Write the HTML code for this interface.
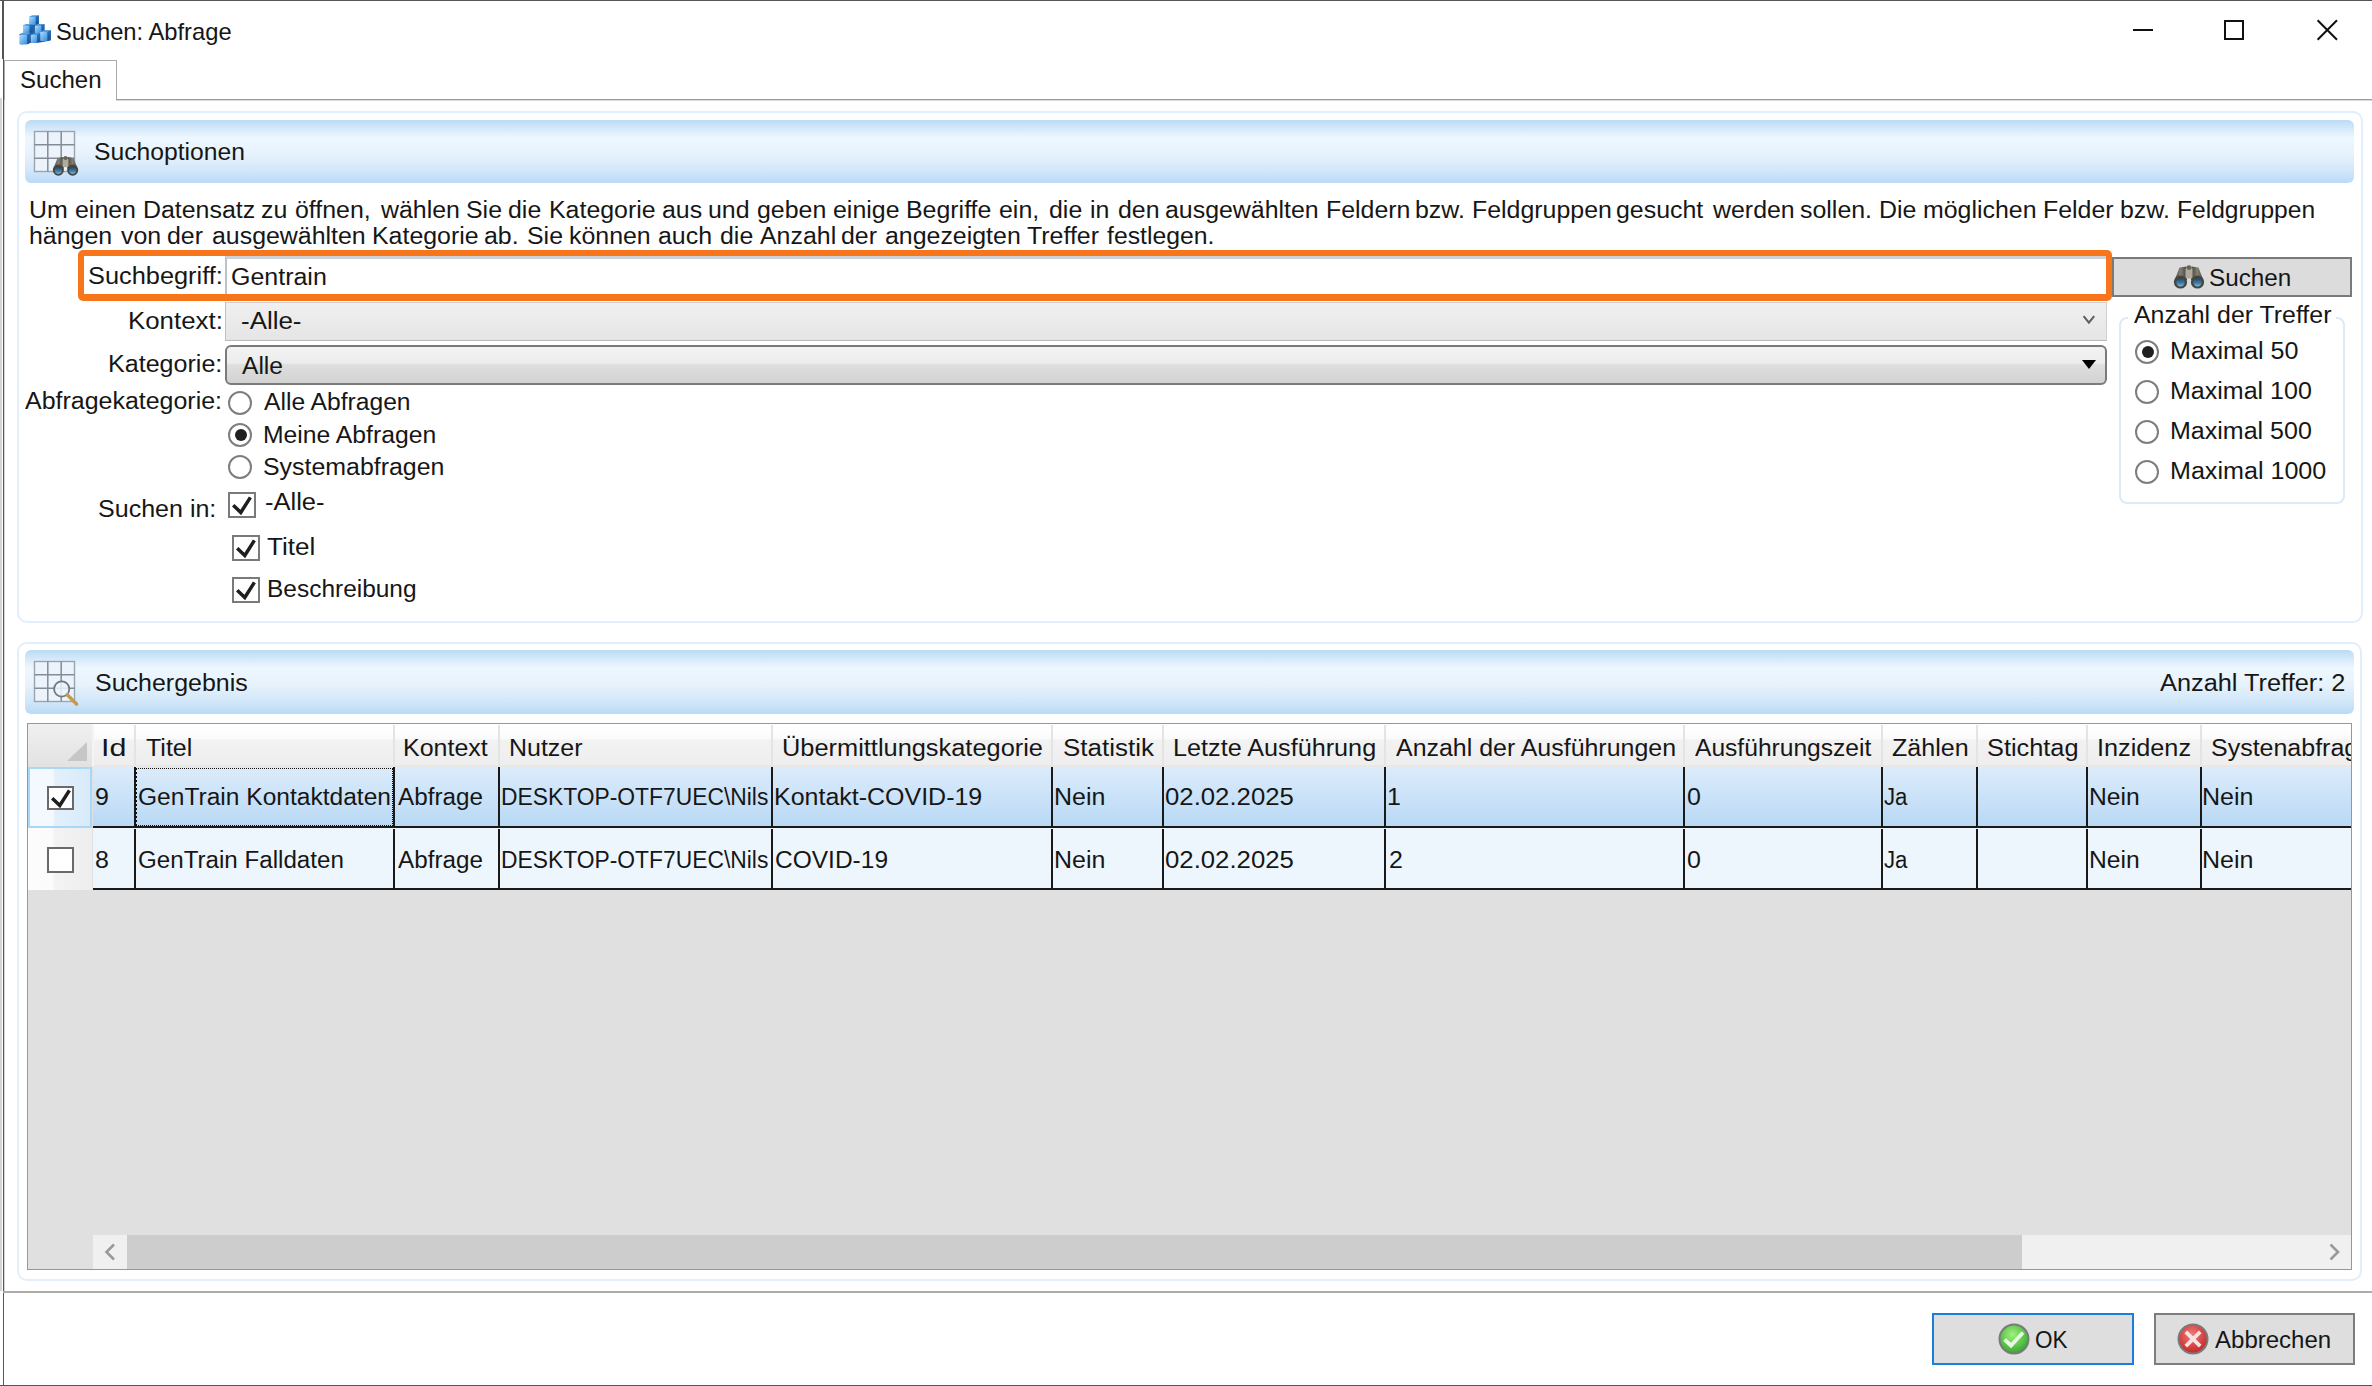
<!DOCTYPE html>
<html><head><meta charset="utf-8">
<style>
html,body{margin:0;padding:0;width:2372px;height:1386px;overflow:hidden;background:#fff;}
body{position:relative;font-family:"Liberation Sans", sans-serif;color:#000;}
.a{position:absolute;box-sizing:border-box;}
.t{position:absolute;white-space:pre;line-height:30px;transform-origin:0 0;font-family:"Liberation Sans", sans-serif;color:#161616;}
.hdr{background:linear-gradient(to bottom,#bbdbf5 0%,#eef7fe 28%,#e6f2fc 55%,#d2e7f9 80%,#badaf5 100%);border-radius:6px;}
.grp{border:2px solid #e1eefb;border-radius:10px;}
.radio{position:absolute;box-sizing:border-box;width:24px;height:24px;border-radius:50%;border:2px solid #7e7e7e;background:#fff;}
.radio.on{border-color:#7e7e7e;}
.radio.on::after{content:"";position:absolute;left:4.5px;top:4px;width:12px;height:12px;border-radius:50%;background:#202020;}
.cb{position:absolute;box-sizing:border-box;width:28px;height:26px;border:2px solid #7a7a7a;background:#fff;}
.vl{position:absolute;width:2px;background:#1a1a1a;}
.hs{position:absolute;width:2px;background:#e4e4e4;}
</style></head><body>
<!-- window frame -->
<div class="a" style="left:0;top:0;width:2372px;height:1px;background:#555;"></div>
<div class="a" style="left:2px;top:0;width:2px;height:59px;background:#555;"></div>
<div class="a" style="left:3px;top:59px;width:1px;height:1327px;background:#555;"></div>
<div class="a" style="left:0;top:98px;width:2px;height:1193px;background:#d4d4d4;"></div>
<div class="a" style="left:4px;top:99px;width:1px;height:1192px;background:#d8d8d8;"></div>
<div class="a" style="left:0;top:1385px;width:2372px;height:1px;background:#555;"></div>

<!-- title icon -->
<svg class="a" style="left:18px;top:14px" width="34" height="32" viewBox="0 0 34 32">
 <defs>
  <linearGradient id="cf" x1="0" y1="0" x2="1" y2="1"><stop offset="0" stop-color="#b4dcfc"/><stop offset="0.5" stop-color="#6db6f2"/><stop offset="1" stop-color="#3a8ad6"/></linearGradient>
  <linearGradient id="cs" x1="0" y1="0" x2="0" y2="1"><stop offset="0" stop-color="#2b72bb"/><stop offset="1" stop-color="#17508f"/></linearGradient>
 </defs>
 <g>
  <polygon points="11.5,3 20.8,1.5 20.8,10.2 26.3,10.2 26.3,16.5 32.8,16.5 32.8,26.5 22,28.5 12.8,28.8 3,30.5 1.5,20 5.5,19 5.5,11 11.5,10.5" fill="#23609e"/>
  <polygon points="11.0,2.9 14.1,1.3 20.8,1.3 17.7,2.9" fill="#4f9fe4"/>
  <polygon points="17.7,2.9 20.8,1.3 20.8,9.5 17.7,11.1" fill="url(#cs)"/>
  <rect x="11.0" y="2.9" width="6.7" height="8.2" rx="1" fill="url(#cf)"/>
  <polygon points="16.9,11.5 20.0,10.0 26.5,10.0 23.4,11.5" fill="#4f9fe4"/>
  <polygon points="23.4,11.5 26.5,10.0 26.5,18.1 23.4,19.6" fill="url(#cs)"/>
  <rect x="16.9" y="11.5" width="6.5" height="8.1" rx="1" fill="url(#cf)"/>
  <polygon points="5.2,11.6 8.1,10.1 14.4,10.1 11.5,11.6" fill="#4f9fe4"/>
  <polygon points="11.5,11.6 14.4,10.1 14.4,17.8 11.5,19.3" fill="url(#cs)"/>
  <rect x="5.2" y="11.6" width="6.3" height="7.7" rx="1" fill="url(#cf)"/>
  <polygon points="22.1,17.9 25.6,16.2 32.9,16.2 29.4,17.9" fill="#4f9fe4"/>
  <polygon points="29.4,17.9 32.9,16.2 32.9,25.3 29.4,27.0" fill="url(#cs)"/>
  <rect x="22.1" y="17.9" width="7.3" height="9.1" rx="1" fill="url(#cf)"/>
  <polygon points="12.6,20.9 15.7,19.4 22.2,19.4 19.1,20.9" fill="#4f9fe4"/>
  <polygon points="19.1,20.9 22.2,19.4 22.2,27.5 19.1,29.0" fill="url(#cs)"/>
  <rect x="12.6" y="20.9" width="6.5" height="8.1" rx="1" fill="url(#cf)"/>
  <polygon points="1.3,20.9 4.9,19.1 12.7,19.1 9.1,20.9" fill="#4f9fe4"/>
  <polygon points="9.1,20.9 12.7,19.1 12.7,28.7 9.1,30.5" fill="url(#cs)"/>
  <rect x="1.3" y="20.9" width="7.8" height="9.6" rx="1" fill="url(#cf)"/>
 </g>
</svg>

<!-- window buttons -->
<div class="a" style="left:2133px;top:29px;width:20px;height:2px;background:#111;"></div>
<div class="a" style="left:2224px;top:20px;width:20px;height:20px;border:2px solid #111;"></div>
<svg class="a" style="left:2316px;top:19px" width="23" height="23" viewBox="0 0 23 23"><path d="M1.6 1.3 L21 20.7 M21 1.3 L1.6 20.7" stroke="#111" stroke-width="2" fill="none"/></svg>

<!-- tab -->
<div class="a" style="left:4px;top:60px;width:113px;height:40px;border:1px solid #aaa;border-bottom:none;background:#fff;"></div>
<div class="a" style="left:116px;top:99px;width:2256px;height:1px;background:#9c9c9c;"></div><div class="a" style="left:116px;top:100px;width:2256px;height:1px;background:#dadada;"></div>

<!-- tab page bottom -->
<div class="a" style="left:3px;top:1291px;width:2369px;height:2px;background:#acacac;"></div>

<!-- group 1 -->
<div class="a grp" style="left:17px;top:111px;width:2346px;height:512px;"></div>
<div class="a hdr" style="left:25px;top:120px;width:2329px;height:63px;"></div>
<!-- icon grid 1 -->
<svg class="a" style="left:33px;top:130px" width="48" height="48" viewBox="0 0 48 48">
 <rect x="1.5" y="1.5" width="40" height="40" fill="#edf3fa" stroke="#9aa4ae" stroke-width="1.4"/>
 <path d="M14.8 1.5V41.5M28.2 1.5V41.5M1.5 14.8H41.5M1.5 28.2H41.5" stroke="#838d97" stroke-width="1.5"/>
</svg>
<svg class="a" style="left:52px;top:155px" width="27" height="21" viewBox="0 0 32 25">
 <defs>
  <linearGradient id="h1b" x1="0" y1="0" x2="1" y2="0"><stop offset="0" stop-color="#45433c"/><stop offset="0.5" stop-color="#827f73"/><stop offset="1" stop-color="#45433c"/></linearGradient>
  <linearGradient id="h1g" x1="0" y1="0" x2="0" y2="1"><stop offset="0" stop-color="#24445e"/><stop offset="0.6" stop-color="#3f7ea8"/><stop offset="1" stop-color="#6cc0e8"/></linearGradient>
 </defs>
 <polygon points="1,18 6.5,3.5 13.5,2.5 14,16" fill="url(#h1b)"/>
 <polygon points="18,16 18.5,2.5 25.5,3.5 31,18" fill="url(#h1b)"/>
 <rect x="12.5" y="4.5" width="7" height="10" fill="#b0ab9b"/>
 <circle cx="16" cy="3.6" r="2.4" fill="#66635a"/>
 <circle cx="7.5" cy="18" r="6.6" fill="#46453f"/>
 <circle cx="24.5" cy="18" r="6.6" fill="#46453f"/>
 <circle cx="7.5" cy="18.3" r="4.2" fill="url(#h1g)"/>
 <circle cx="24.5" cy="18.3" r="4.2" fill="url(#h1g)"/>
</svg>

<!-- orange search box -->
<div class="a" style="left:225px;top:256px;width:1882px;height:38px;border-left:2px solid #bcc2c8;border-top:3px solid #cdd1d5;background:#fff;"></div>
<div class="a" style="left:78px;top:250px;width:2034px;height:51px;border:6px solid #f7761c;border-width:6.5px 6px 7px 6px;border-radius:5px;"></div>
<!-- Suchen button -->
<div class="a" style="left:2112px;top:257px;width:240px;height:40px;border:2px solid #7a7a7a;background:#dcdcdc;"></div>
<svg class="a" style="left:2173px;top:264px" width="32" height="25" viewBox="0 0 32 25">
 <defs>
  <linearGradient id="h2b" x1="0" y1="0" x2="1" y2="0"><stop offset="0" stop-color="#45433c"/><stop offset="0.5" stop-color="#827f73"/><stop offset="1" stop-color="#45433c"/></linearGradient>
  <linearGradient id="h2g" x1="0" y1="0" x2="0" y2="1"><stop offset="0" stop-color="#24445e"/><stop offset="0.6" stop-color="#3f7ea8"/><stop offset="1" stop-color="#6cc0e8"/></linearGradient>
 </defs>
 <polygon points="1,18 6.5,3.5 13.5,2.5 14,16" fill="url(#h2b)"/>
 <polygon points="18,16 18.5,2.5 25.5,3.5 31,18" fill="url(#h2b)"/>
 <rect x="12.5" y="4.5" width="7" height="10" fill="#b0ab9b"/>
 <circle cx="16" cy="3.6" r="2.4" fill="#66635a"/>
 <circle cx="7.5" cy="18" r="6.6" fill="#46453f"/>
 <circle cx="24.5" cy="18" r="6.6" fill="#46453f"/>
 <circle cx="7.5" cy="18.3" r="4.2" fill="url(#h2g)"/>
 <circle cx="24.5" cy="18.3" r="4.2" fill="url(#h2g)"/>
</svg>

<!-- Kontext combo -->
<div class="a" style="left:225px;top:302px;width:1882px;height:39px;background:linear-gradient(#f0f0f0,#e5e5e5);border:1px solid #cfcfcf;border-left-color:#c0c0c0;border-bottom-color:#b9b9b9;"></div>
<svg class="a" style="left:2082px;top:314px" width="14" height="12" viewBox="0 0 14 12"><path d="M1.6 2.2 L6.9 8.6 L12.2 2.2" stroke="#606060" stroke-width="2.1" fill="none"/></svg>
<!-- Kategorie combo -->
<div class="a" style="left:225px;top:345px;width:1882px;height:40px;border:2px solid #7b7b7b;border-radius:6px;background:linear-gradient(#f3f3f3 0%,#ececec 45%,#dedede 50%,#d2d2d2 100%);"></div>
<svg class="a" style="left:2082px;top:360px" width="14" height="10" viewBox="0 0 14 10"><path d="M0 0 H14 L7 9 Z" fill="#000"/></svg>

<!-- radios left -->
<div class="radio" style="left:228px;top:391px;"></div>
<div class="radio on" style="left:228px;top:423px;"></div>
<div class="radio" style="left:228px;top:455px;"></div>
<!-- checkboxes -->
<div class="cb" style="left:228px;top:492px;"><svg style="position:absolute;left:0px;top:0px;overflow:visible" width="25" height="25" viewBox="0 0 25 25"><path d="M3.2 11.2 L10.8 18.4 L20.4 3.4" stroke="#1e1e1e" stroke-width="3.5" fill="none"/></svg></div>
<div class="cb" style="left:232px;top:535px;"><svg style="position:absolute;left:0px;top:0px;overflow:visible" width="25" height="25" viewBox="0 0 25 25"><path d="M3.2 11.2 L10.8 18.4 L20.4 3.4" stroke="#1e1e1e" stroke-width="3.5" fill="none"/></svg></div>
<div class="cb" style="left:232px;top:577px;"><svg style="position:absolute;left:0px;top:0px;overflow:visible" width="25" height="25" viewBox="0 0 25 25"><path d="M3.2 11.2 L10.8 18.4 L20.4 3.4" stroke="#1e1e1e" stroke-width="3.5" fill="none"/></svg></div>

<!-- Anzahl der Treffer group -->
<div class="a" style="left:2119px;top:317px;width:226px;height:187px;border:2px solid #dcebfa;border-radius:8px;"></div>
<div class="a" style="left:2128px;top:306px;width:208px;height:20px;background:#fff;"></div>
<div class="radio on" style="left:2135px;top:340px;"></div>
<div class="radio" style="left:2135px;top:380px;"></div>
<div class="radio" style="left:2135px;top:420px;"></div>
<div class="radio" style="left:2135px;top:460px;"></div>

<!-- group 2 -->
<div class="a grp" style="left:17px;top:642px;width:2345px;height:639px;"></div>
<div class="a hdr" style="left:25px;top:650px;width:2329px;height:64px;"></div>
<svg class="a" style="left:33px;top:660px" width="48" height="48" viewBox="0 0 48 48">
 <rect x="1.5" y="1.5" width="40" height="40" fill="#edf3fa" stroke="#9aa4ae" stroke-width="1.4"/>
 <path d="M14.8 1.5V41.5M28.2 1.5V41.5M1.5 14.8H41.5M1.5 28.2H41.5" stroke="#838d97" stroke-width="1.5"/>
 <circle cx="28.7" cy="29" r="7.6" fill="rgba(236,244,252,0.85)" stroke="#6d7a85" stroke-width="1.8"/>
 <path d="M34.5 35 L43.5 44" stroke="#c49a52" stroke-width="3.6" stroke-linecap="round"/>
</svg>

<!-- table -->
<div class="a" style="left:27px;top:723px;width:2325px;height:547px;border:1px solid #7f9db9;background:#e0e0e0;overflow:hidden;">
  <!-- header row -->
  <div class="a" style="left:0;top:0;width:2323px;height:43px;background:linear-gradient(#ffffff 0%,#fbfbfb 35%,#f2f2f3 40%,#eeeeef 100%);border-bottom:2px solid #e7e7e7;"></div>
  <div class="a" style="left:0;top:0;width:64px;height:43px;background:linear-gradient(#f0f0f0,#e2e2e2);"></div>
  <svg class="a" style="left:39px;top:18px" width="20" height="20" viewBox="0 0 20 20"><path d="M20 0 V19 H0 Z" fill="#c6c6c6"/></svg>
  <!-- row 1 -->
  <div class="a" style="left:65px;top:43px;width:2258px;height:61px;background:linear-gradient(#dcecfb,#b8d8f5);"></div>
  <div class="a" style="left:0;top:43px;width:64px;height:61px;background:linear-gradient(to right,#f3f9fe 0%,#f3f9fe 38%,#e2f0fb 42%,#d8eaf9 100%);border:2px solid #a8d8f6;"></div>
  <!-- row 2 -->
  <div class="a" style="left:65px;top:104px;width:2258px;height:62px;background:#eef6fd;"></div>
  <div class="a" style="left:0;top:104px;width:64px;height:62px;background:linear-gradient(to right,#fdfdfd 0%,#fbfbfb 38%,#f3f3f4 42%,#eeeeef 100%);"></div>
  <!-- row lines -->
  <div class="a" style="left:65px;top:102px;width:2258px;height:2px;background:#1a1a1a;"></div>
  <div class="a" style="left:65px;top:164px;width:2258px;height:2px;background:#1a1a1a;"></div>
  <!-- scrollbar -->
  <div class="a" style="left:65px;top:511px;width:2258px;height:35px;background:#f0f0f0;"></div>
  <div class="a" style="left:99px;top:511px;width:1895px;height:35px;background:#cdcdcd;"></div>
  <svg class="a" style="left:74px;top:519px" width="16" height="20" viewBox="0 0 16 20"><path d="M12 1.5 L4.5 9 L12 16.5" stroke="#9a9a9a" stroke-width="2.6" fill="none"/></svg>
  <svg class="a" style="left:2301px;top:519px" width="16" height="20" viewBox="0 0 16 20"><path d="M1.5 1.5 L9 9 L1.5 16.5" stroke="#9a9a9a" stroke-width="2.6" fill="none"/></svg>
</div>
<!-- table column lines (header separators + row lines) -->
<div id="cols"></div>
<div class="hs" style="left:134px;top:725px;height:41px;"></div>
<div class="vl" style="left:134px;top:767px;height:59px;"></div>
<div class="vl" style="left:134px;top:829px;height:59px;"></div>
<div class="hs" style="left:393px;top:725px;height:41px;"></div>
<div class="vl" style="left:393px;top:767px;height:59px;"></div>
<div class="vl" style="left:393px;top:829px;height:59px;"></div>
<div class="hs" style="left:498px;top:725px;height:41px;"></div>
<div class="vl" style="left:498px;top:767px;height:59px;"></div>
<div class="vl" style="left:498px;top:829px;height:59px;"></div>
<div class="hs" style="left:771px;top:725px;height:41px;"></div>
<div class="vl" style="left:771px;top:767px;height:59px;"></div>
<div class="vl" style="left:771px;top:829px;height:59px;"></div>
<div class="hs" style="left:1051px;top:725px;height:41px;"></div>
<div class="vl" style="left:1051px;top:767px;height:59px;"></div>
<div class="vl" style="left:1051px;top:829px;height:59px;"></div>
<div class="hs" style="left:1162px;top:725px;height:41px;"></div>
<div class="vl" style="left:1162px;top:767px;height:59px;"></div>
<div class="vl" style="left:1162px;top:829px;height:59px;"></div>
<div class="hs" style="left:1384px;top:725px;height:41px;"></div>
<div class="vl" style="left:1384px;top:767px;height:59px;"></div>
<div class="vl" style="left:1384px;top:829px;height:59px;"></div>
<div class="hs" style="left:1683px;top:725px;height:41px;"></div>
<div class="vl" style="left:1683px;top:767px;height:59px;"></div>
<div class="vl" style="left:1683px;top:829px;height:59px;"></div>
<div class="hs" style="left:1881px;top:725px;height:41px;"></div>
<div class="vl" style="left:1881px;top:767px;height:59px;"></div>
<div class="vl" style="left:1881px;top:829px;height:59px;"></div>
<div class="hs" style="left:1976px;top:725px;height:41px;"></div>
<div class="vl" style="left:1976px;top:767px;height:59px;"></div>
<div class="vl" style="left:1976px;top:829px;height:59px;"></div>
<div class="hs" style="left:2086px;top:725px;height:41px;"></div>
<div class="vl" style="left:2086px;top:767px;height:59px;"></div>
<div class="vl" style="left:2086px;top:829px;height:59px;"></div>
<div class="hs" style="left:2200px;top:725px;height:41px;"></div>
<div class="vl" style="left:2200px;top:767px;height:59px;"></div>
<div class="vl" style="left:2200px;top:829px;height:59px;"></div>
<div class="hs" style="left:92px;top:725px;height:41px;background:#f4f4f4"></div>

<!-- row checkboxes -->
<div class="cb" style="left:47px;top:786px;width:27px;height:24px;border-color:#6a6a6a;"><svg style="position:absolute;left:0px;top:-1px;overflow:visible" width="25" height="25" viewBox="0 0 25 25"><path d="M3.2 11.2 L10.8 18.4 L20.4 3.4" stroke="#1e1e1e" stroke-width="3.5" fill="none"/></svg></div>
<div class="cb" style="left:47px;top:847px;width:27px;height:26px;border-color:#6a6a6a;"></div>

<!-- focus dotted rect on cell -->
<div class="a" style="left:135px;top:768px;width:258px;height:58px;border:1px dotted #111;border-left:2px dotted #111;"></div>

<!-- buttons -->
<div class="a" style="left:1932px;top:1313px;width:202px;height:52px;border:2px solid #1a7fd8;background:#dedede;"></div>
<div class="a" style="left:2154px;top:1313px;width:201px;height:52px;border:2px solid #7d7d7d;background:#dedede;"></div>
<svg class="a" style="left:1998px;top:1323px" width="32" height="32" viewBox="0 0 32 32">
 <defs><radialGradient id="gok" cx="0.45" cy="0.35" r="0.7"><stop offset="0" stop-color="#9df27a"/><stop offset="1" stop-color="#2ea32a"/></radialGradient></defs>
 <circle cx="16" cy="16" r="14.5" fill="url(#gok)" stroke="#7a7a7a" stroke-width="2"/>
 <path d="M6.5 16.5 L13 22.5 L25 9.5" stroke="#eaf7e4" stroke-width="3.8" fill="none"/>
</svg>
<svg class="a" style="left:2177px;top:1323px" width="32" height="32" viewBox="0 0 32 32">
 <defs><radialGradient id="gx" cx="0.45" cy="0.35" r="0.7"><stop offset="0" stop-color="#f27a7a"/><stop offset="1" stop-color="#c21f1f"/></radialGradient></defs>
 <circle cx="16" cy="16" r="14.5" fill="url(#gx)" stroke="#7a7a7a" stroke-width="2"/>
 <path d="M8.8 8.8 L23.2 23.2 M23.2 8.8 L8.8 23.2" stroke="#f6e4e4" stroke-width="3.8" fill="none"/>
</svg>

<div class="t" style="left:56.01px;top:16.68px;font-size:24px;transform:scaleX(0.9897);">Suchen: Abfrage</div>
<div class="t" style="left:19.76px;top:65.03px;font-size:23px;transform:scaleX(1.0447);">Suchen</div>
<div class="t" style="left:94.33px;top:137.03px;font-size:23px;transform:scaleX(1.0727);">Suchoptionen</div>
<div class="t" style="left:29.23px;top:195.03px;font-size:23px;transform:scaleX(1.0830);">Um</div>
<div class="t" style="left:75.12px;top:195.03px;font-size:23px;transform:scaleX(1.0830);">einen</div>
<div class="t" style="left:142.53px;top:195.03px;font-size:23px;transform:scaleX(1.0830);">Datensatz</div>
<div class="t" style="left:261.22px;top:195.03px;font-size:23px;transform:scaleX(1.0830);">zu</div>
<div class="t" style="left:294.62px;top:195.03px;font-size:23px;transform:scaleX(1.0830);">öffnen,</div>
<div class="t" style="left:381.20px;top:195.03px;font-size:23px;transform:scaleX(1.0830);">wählen</div>
<div class="t" style="left:466.22px;top:195.03px;font-size:23px;transform:scaleX(1.0830);">Sie</div>
<div class="t" style="left:508.42px;top:195.03px;font-size:23px;transform:scaleX(1.0830);">die</div>
<div class="t" style="left:548.73px;top:195.03px;font-size:23px;transform:scaleX(1.0830);">Kategorie</div>
<div class="t" style="left:662.12px;top:195.03px;font-size:23px;transform:scaleX(1.0830);">aus</div>
<div class="t" style="left:708.42px;top:195.03px;font-size:23px;transform:scaleX(1.0830);">und</div>
<div class="t" style="left:757.02px;top:195.03px;font-size:23px;transform:scaleX(1.0830);">geben</div>
<div class="t" style="left:832.92px;top:195.03px;font-size:23px;transform:scaleX(1.0830);">einige</div>
<div class="t" style="left:905.93px;top:195.03px;font-size:23px;transform:scaleX(1.0830);">Begriffe</div>
<div class="t" style="left:999.32px;top:195.03px;font-size:23px;transform:scaleX(1.0830);">ein,</div>
<div class="t" style="left:1048.62px;top:195.03px;font-size:23px;transform:scaleX(1.0830);">die</div>
<div class="t" style="left:1089.92px;top:195.03px;font-size:23px;transform:scaleX(1.0830);">in</div>
<div class="t" style="left:1118.12px;top:195.03px;font-size:23px;transform:scaleX(1.0830);">den</div>
<div class="t" style="left:1165.22px;top:195.03px;font-size:23px;transform:scaleX(1.0830);">ausgewählten</div>
<div class="t" style="left:1325.53px;top:195.03px;font-size:23px;transform:scaleX(1.0830);">Feldern</div>
<div class="t" style="left:1415.12px;top:195.03px;font-size:23px;transform:scaleX(1.0830);">bzw.</div>
<div class="t" style="left:1472.23px;top:195.03px;font-size:23px;transform:scaleX(1.0830);">Feldgruppen</div>
<div class="t" style="left:1616.22px;top:195.03px;font-size:23px;transform:scaleX(1.0830);">gesucht</div>
<div class="t" style="left:1713.00px;top:195.03px;font-size:23px;transform:scaleX(1.0830);">werden</div>
<div class="t" style="left:1799.92px;top:195.03px;font-size:23px;transform:scaleX(1.0830);">sollen.</div>
<div class="t" style="left:1878.63px;top:195.03px;font-size:23px;transform:scaleX(1.0830);">Die</div>
<div class="t" style="left:1923.22px;top:195.03px;font-size:23px;transform:scaleX(1.0830);">möglichen</div>
<div class="t" style="left:2043.43px;top:195.03px;font-size:23px;transform:scaleX(1.0830);">Felder</div>
<div class="t" style="left:2119.92px;top:195.03px;font-size:23px;transform:scaleX(1.0830);">bzw.</div>
<div class="t" style="left:2176.76px;top:195.03px;font-size:23px;transform:scaleX(1.0698);">Feldgruppen</div>
<div class="t" style="left:29.23px;top:221.03px;font-size:23px;transform:scaleX(1.0830);">hängen</div>
<div class="t" style="left:121.20px;top:221.03px;font-size:23px;transform:scaleX(1.0830);">von</div>
<div class="t" style="left:166.92px;top:221.03px;font-size:23px;transform:scaleX(1.0830);">der</div>
<div class="t" style="left:211.72px;top:221.03px;font-size:23px;transform:scaleX(1.0830);">ausgewählten</div>
<div class="t" style="left:371.53px;top:221.03px;font-size:23px;transform:scaleX(1.0830);">Kategorie</div>
<div class="t" style="left:483.92px;top:221.03px;font-size:23px;transform:scaleX(1.0830);">ab.</div>
<div class="t" style="left:527.42px;top:221.03px;font-size:23px;transform:scaleX(1.0830);">Sie</div>
<div class="t" style="left:569.32px;top:221.03px;font-size:23px;transform:scaleX(1.0830);">können</div>
<div class="t" style="left:657.82px;top:221.03px;font-size:23px;transform:scaleX(1.0830);">auch</div>
<div class="t" style="left:719.82px;top:221.03px;font-size:23px;transform:scaleX(1.0830);">die</div>
<div class="t" style="left:760.10px;top:221.03px;font-size:23px;transform:scaleX(1.0830);">Anzahl</div>
<div class="t" style="left:841.22px;top:221.03px;font-size:23px;transform:scaleX(1.0830);">der</div>
<div class="t" style="left:884.72px;top:221.03px;font-size:23px;transform:scaleX(1.0830);">angezeigten</div>
<div class="t" style="left:1026.50px;top:221.03px;font-size:23px;transform:scaleX(1.0830);">Treffer</div>
<div class="t" style="left:1107.10px;top:221.03px;font-size:23px;transform:scaleX(1.0765);">festlegen.</div>
<div class="t" style="left:87.70px;top:261.03px;font-size:23px;transform:scaleX(1.1025);">Suchbegriff:</div>
<div class="t" style="left:231.41px;top:262.03px;font-size:23px;transform:scaleX(1.0860);">Gentrain</div>
<div class="t" style="left:2208.94px;top:262.53px;font-size:23px;transform:scaleX(1.0553);">Suchen</div>
<div class="t" style="left:127.65px;top:305.53px;font-size:23px;transform:scaleX(1.1235);">Kontext:</div>
<div class="t" style="left:241.07px;top:306.03px;font-size:23px;transform:scaleX(1.1269);">-Alle-</div>
<div class="t" style="left:108.22px;top:349.03px;font-size:23px;transform:scaleX(1.0901);">Kategorie:</div>
<div class="t" style="left:242.40px;top:350.53px;font-size:23px;transform:scaleX(1.0676);">Alle</div>
<div class="t" style="left:25.00px;top:385.53px;font-size:23px;transform:scaleX(1.0850);">Abfragekategorie:</div>
<div class="t" style="left:264.40px;top:387.03px;font-size:23px;transform:scaleX(1.0713);">Alle Abfragen</div>
<div class="t" style="left:262.85px;top:420.03px;font-size:23px;transform:scaleX(1.0753);">Meine Abfragen</div>
<div class="t" style="left:263.12px;top:452.03px;font-size:23px;transform:scaleX(1.0830);">Systemabfragen</div>
<div class="t" style="left:98.11px;top:494.03px;font-size:23px;transform:scaleX(1.0887);">Suchen in:</div>
<div class="t" style="left:265.49px;top:487.03px;font-size:23px;transform:scaleX(1.1096);">-Alle-</div>
<div class="t" style="left:267.40px;top:531.53px;font-size:23px;transform:scaleX(1.1341);">Titel</div>
<div class="t" style="left:266.97px;top:574.03px;font-size:23px;transform:scaleX(1.0635);">Beschreibung</div>
<div class="t" style="left:2134.00px;top:299.53px;font-size:23px;transform:scaleX(1.0824);">Anzahl der Treffer</div>
<div class="t" style="left:2170.22px;top:335.63px;font-size:23px;transform:scaleX(1.0922);">Maximal 50</div>
<div class="t" style="left:2170.22px;top:375.73px;font-size:23px;transform:scaleX(1.0875);">Maximal 100</div>
<div class="t" style="left:2170.22px;top:415.63px;font-size:23px;transform:scaleX(1.0875);">Maximal 500</div>
<div class="t" style="left:2170.22px;top:455.73px;font-size:23px;transform:scaleX(1.0915);">Maximal 1000</div>
<div class="t" style="left:94.61px;top:667.53px;font-size:23px;transform:scaleX(1.0860);">Suchergebnis</div>
<div class="t" style="left:2159.70px;top:667.53px;font-size:23px;transform:scaleX(1.1012);">Anzahl Treffer: 2</div>
<div class="t" style="left:100.75px;top:732.53px;font-size:23px;transform:scaleX(1.3250);">Id</div>
<div class="t" style="left:146.40px;top:732.53px;font-size:23px;transform:scaleX(1.0860);">Titel</div>
<div class="t" style="left:402.53px;top:732.53px;font-size:23px;transform:scaleX(1.0860);">Kontext</div>
<div class="t" style="left:508.83px;top:732.53px;font-size:23px;transform:scaleX(1.0860);">Nutzer</div>
<div class="t" style="left:781.79px;top:732.53px;font-size:23px;transform:scaleX(1.1034);">Übermittlungskategorie</div>
<div class="t" style="left:1062.67px;top:732.53px;font-size:23px;transform:scaleX(1.1291);">Statistik</div>
<div class="t" style="left:1172.81px;top:732.53px;font-size:23px;transform:scaleX(1.0956);">Letzte Ausführung</div>
<div class="t" style="left:1395.60px;top:732.53px;font-size:23px;transform:scaleX(1.0840);">Anzahl der Ausführungen</div>
<div class="t" style="left:1695.30px;top:732.53px;font-size:23px;transform:scaleX(1.0691);">Ausführungszeit</div>
<div class="t" style="left:1891.81px;top:732.53px;font-size:23px;transform:scaleX(1.0897);">Zählen</div>
<div class="t" style="left:1987.10px;top:732.53px;font-size:23px;transform:scaleX(1.1012);">Stichtag</div>
<div class="t" style="left:2097.30px;top:732.53px;font-size:23px;transform:scaleX(1.0976);">Inzidenz</div>
<div style="position:absolute;left:0;top:0;width:2351px;height:1386px;overflow:hidden"><div class="t" style="left:2210.71px;top:732.53px;font-size:23px;transform:scaleX(1.0860);">Systenabfragen</div></div>
<div class="t" style="left:94.61px;top:781.53px;font-size:23px;transform:scaleX(1.0860);">9</div>
<div class="t" style="left:137.53px;top:781.53px;font-size:23px;transform:scaleX(1.0677);">GenTrain Kontaktdaten</div>
<div class="t" style="left:398.00px;top:781.53px;font-size:23px;transform:scaleX(1.0538);">Abfrage</div>
<div class="t" style="left:501.21px;top:781.53px;font-size:23px;transform:scaleX(0.9929);">DESKTOP-OTF7UEC\Nils</div>
<div class="t" style="left:773.83px;top:781.53px;font-size:23px;transform:scaleX(1.0862);">Kontakt-COVID-19</div>
<div class="t" style="left:1053.53px;top:781.53px;font-size:23px;transform:scaleX(1.0864);">Nein</div>
<div class="t" style="left:1165.38px;top:781.53px;font-size:23px;transform:scaleX(1.1195);">02.02.2025</div>
<div class="t" style="left:1387.43px;top:781.53px;font-size:23px;transform:scaleX(1.0860);">1</div>
<div class="t" style="left:1686.81px;top:781.53px;font-size:23px;transform:scaleX(1.0860);">0</div>
<div class="t" style="left:1883.73px;top:781.53px;font-size:23px;transform:scaleX(0.9652);">Ja</div>
<div class="t" style="left:2089.25px;top:781.53px;font-size:23px;transform:scaleX(1.0727);">Nein</div>
<div class="t" style="left:2202.42px;top:781.53px;font-size:23px;transform:scaleX(1.0886);">Nein</div>
<div class="t" style="left:94.61px;top:844.63px;font-size:23px;transform:scaleX(1.0860);">8</div>
<div class="t" style="left:137.55px;top:844.63px;font-size:23px;transform:scaleX(1.0500);">GenTrain Falldaten</div>
<div class="t" style="left:398.00px;top:844.63px;font-size:23px;transform:scaleX(1.0538);">Abfrage</div>
<div class="t" style="left:501.21px;top:844.63px;font-size:23px;transform:scaleX(0.9929);">DESKTOP-OTF7UEC\Nils</div>
<div class="t" style="left:774.93px;top:844.63px;font-size:23px;transform:scaleX(1.0654);">COVID-19</div>
<div class="t" style="left:1053.53px;top:844.63px;font-size:23px;transform:scaleX(1.0864);">Nein</div>
<div class="t" style="left:1165.38px;top:844.63px;font-size:23px;transform:scaleX(1.1195);">02.02.2025</div>
<div class="t" style="left:1388.51px;top:844.63px;font-size:23px;transform:scaleX(1.0860);">2</div>
<div class="t" style="left:1686.81px;top:844.63px;font-size:23px;transform:scaleX(1.0860);">0</div>
<div class="t" style="left:1883.73px;top:844.63px;font-size:23px;transform:scaleX(0.9652);">Ja</div>
<div class="t" style="left:2089.25px;top:844.63px;font-size:23px;transform:scaleX(1.0727);">Nein</div>
<div class="t" style="left:2202.42px;top:844.63px;font-size:23px;transform:scaleX(1.0886);">Nein</div>
<div class="t" style="left:2034.52px;top:1324.53px;font-size:23px;transform:scaleX(0.9781);">OK</div>
<div class="t" style="left:2214.90px;top:1324.53px;font-size:23px;transform:scaleX(1.0445);">Abbrechen</div>
</body></html>
